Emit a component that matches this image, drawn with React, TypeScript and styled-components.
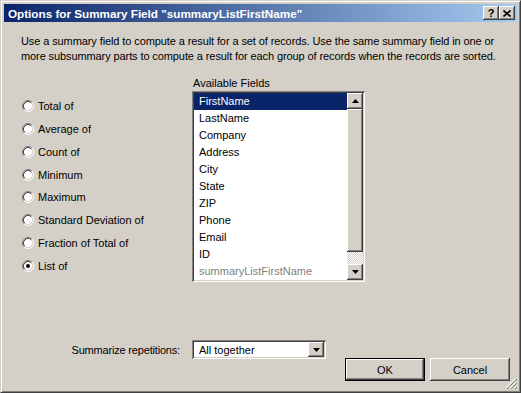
import React, { ReactElement } from "react";
import styled, { createGlobalStyle } from "styled-components";

const GlobalStyle = createGlobalStyle`
    html, body {
        margin: 0;
        padding: 0;
        background: #d4d0c8;
    }
    body {
        font-family: "Liberation Sans", Arial, sans-serif;
        font-size: 11px;
        color: #000;
    }
`;

const raised = `
    box-shadow: inset -1px -1px #404040, inset 1px 1px #ffffff, inset -2px -2px #808080, inset 2px 2px #d4d0c8;
`;

const sunken = `
    box-shadow: inset 1px 1px #808080, inset -1px -1px #ffffff, inset 2px 2px #404040, inset -2px -2px #d4d0c8;
`;

const Window = styled.div`
    position: relative;
    width: 521px;
    height: 393px;
    box-sizing: border-box;
    background: #d4d0c8;
    border: 1px solid;
    border-color: #d4d0c8 #404040 #404040 #d4d0c8;
    box-shadow: inset 1px 1px #ffffff, inset -1px -1px #808080;
    padding: 3px;
    display: flex;
    flex-direction: column;
`;

const TitleBar = styled.div`
    height: 18px;
    flex-shrink: 0;
    display: flex;
    align-items: center;
    padding: 0 2px;
    background: linear-gradient(to right, #0a246a, #a6caf0);
`;

const TitleText = styled.div`
    flex: 1;
    padding-left: 2px;
    font-weight: bold;
    font-size: 11.7px;
    color: #ffffff;
    white-space: nowrap;
`;

const CaptionButton = styled.div`
    width: 16px;
    height: 14px;
    box-sizing: border-box;
    background: #d4d0c8;
    ${raised}
    display: flex;
    align-items: center;
    justify-content: center;
    font-weight: bold;
    font-size: 11px;
    line-height: 14px;
    color: #000;
`;

const Description = styled.p`
    margin: 12px 0 0 17px;
    line-height: 15px;
    letter-spacing: -0.1px;
    white-space: nowrap;
`;

const MainRow = styled.div`
    display: flex;
    margin-top: 13px;
    padding-left: 18px;
`;

const ChoiceColumn = styled.div`
    width: 170px;
    padding-top: 18px;
    display: flex;
    flex-direction: column;
`;

const ChoiceRow = styled.label`
    height: 22.75px;
    display: flex;
    align-items: center;
    gap: 4px;
    white-space: nowrap;
`;

const FieldsColumn = styled.div`
    display: flex;
    flex-direction: column;
`;

const FieldsLabel = styled.div`
    height: 14px;
    line-height: 13px;
    padding-left: 1px;
`;

const ListBox = styled.div`
    width: 173px;
    height: 191px;
    box-sizing: border-box;
    padding: 2px;
    background: #ffffff;
    ${sunken}
    display: flex;
`;

const Rows = styled.div`
    flex: 1;
    display: flex;
    flex-direction: column;
`;

const Row = styled.div<{ $selected?: boolean; $dim?: boolean }>`
    height: 17px;
    line-height: 17px;
    padding-left: 5px;
    white-space: nowrap;
    background: ${(p) => (p.$selected ? "#0a246a" : "transparent")};
    color: ${(p) => (p.$selected ? "#ffffff" : p.$dim ? "#7f7f7f" : "#000000")};
`;

const ScrollBar = styled.div`
    width: 16px;
    display: flex;
    flex-direction: column;
`;

const ScrollButton = styled.div`
    width: 16px;
    height: 16px;
    box-sizing: border-box;
    background: #d4d0c8;
    ${raised}
    display: flex;
    align-items: center;
    justify-content: center;
    flex-shrink: 0;
`;

const Thumb = styled.div`
    height: 143px;
    background: #d4d0c8;
    ${raised}
`;

const Track = styled.div`
    flex: 1;
    background: repeating-conic-gradient(#ffffff 0 25%, #d4d0c8 0 50%) 0 0 / 2px 2px;
`;

const RepeatRow = styled.div`
    display: flex;
    align-items: center;
    margin-top: 58px;
    padding-left: 18px;
`;

const RepeatLabel = styled.div`
    width: 170px;
    box-sizing: border-box;
    padding-right: 12px;
    text-align: right;
    letter-spacing: -0.18px;
    white-space: nowrap;
`;

const Combo = styled.div`
    width: 134px;
    height: 19px;
    box-sizing: border-box;
    padding: 2px;
    background: #ffffff;
    ${sunken}
    display: flex;
    align-items: center;
`;

const ComboText = styled.div`
    flex: 1;
    padding-left: 5px;
`;

const ComboButton = styled(ScrollButton)`
    height: 15px;
`;

const ButtonRow = styled.div`
    display: flex;
    justify-content: flex-end;
    gap: 5px;
    margin-top: -1px;
    padding-right: 7px;
`;

const PushButton = styled.button<{ $default?: boolean }>`
    width: 80px;
    height: 23px;
    box-sizing: border-box;
    padding: 0;
    font-family: "Liberation Sans", Arial, sans-serif;
    font-size: 11px;
    color: #000;
    background: #d4d0c8;
    border: ${(p) => (p.$default ? "1px solid #000" : "none")};
    box-shadow: inset -1px -1px #404040, inset 1px 1px #ffffff, inset -2px -2px #808080, inset 2px 2px #d4d0c8;
`;

const Grip = styled.svg`
    position: absolute;
    right: 3px;
    bottom: 3px;
`;

const Radio = ({ checked }: { checked?: boolean }): ReactElement => (
    <svg width="12" height="12" viewBox="0 0 12 12">
        <circle cx="6" cy="6" r="4.5" fill="#ffffff" />
        <path d="M2.11 9.89 A5.5 5.5 0 0 1 9.89 2.11" fill="none" stroke="#808080" />
        <path d="M9.89 2.11 A5.5 5.5 0 0 1 2.11 9.89" fill="none" stroke="#ffffff" />
        <path d="M2.82 9.18 A4.5 4.5 0 0 1 9.18 2.82" fill="none" stroke="#404040" />
        <path d="M9.18 2.82 A4.5 4.5 0 0 1 2.82 9.18" fill="none" stroke="#d4d0c8" />
        {checked && <circle cx="6" cy="6" r="2" fill="#000" />}
    </svg>
);

const Arrow = ({ up }: { up?: boolean }): ReactElement => (
    <svg width="7" height="4" viewBox="0 0 7 4">
        <path d={up ? "M3.5 0 L7 4 L0 4 Z" : "M0 0 L7 0 L3.5 4 Z"} fill="#000" />
    </svg>
);

const choices = [
    "Total of",
    "Average of",
    "Count of",
    "Minimum",
    "Maximum",
    "Standard Deviation of",
    "Fraction of Total of",
    "List of"
];

const fields = ["FirstName", "LastName", "Company", "Address", "City", "State", "ZIP", "Phone", "Email", "ID"];

const App = (): ReactElement => (
    <>
        <GlobalStyle />
        <Window>
            <TitleBar>
                <TitleText>Options for Summary Field &quot;summaryListFirstName&quot;</TitleText>
                <CaptionButton>?</CaptionButton>
                <CaptionButton>
                    <svg width="8" height="7" viewBox="0 0 8 7">
                        <path d="M0.5 0.5 L7.5 6.5 M7.5 0.5 L0.5 6.5" stroke="#000" strokeWidth="1.6" />
                    </svg>
                </CaptionButton>
            </TitleBar>
            <Description>
                Use a summary field to compute a result for a set of records. Use the same summary field in one or
                <br />
                more subsummary parts to compute a result for each group of records when the records are sorted.
            </Description>
            <MainRow>
                <ChoiceColumn>
                    {choices.map((c) => (
                        <ChoiceRow key={c}>
                            <Radio checked={c === "List of"} />
                            {c}
                        </ChoiceRow>
                    ))}
                </ChoiceColumn>
                <FieldsColumn>
                    <FieldsLabel>Available Fields</FieldsLabel>
                    <ListBox>
                        <Rows>
                            {fields.map((f, i) => (
                                <Row key={f} $selected={i === 0}>
                                    {f}
                                </Row>
                            ))}
                            <Row $dim>summaryListFirstName</Row>
                        </Rows>
                        <ScrollBar>
                            <ScrollButton>
                                <Arrow up />
                            </ScrollButton>
                            <Thumb />
                            <Track />
                            <ScrollButton>
                                <Arrow />
                            </ScrollButton>
                        </ScrollBar>
                    </ListBox>
                </FieldsColumn>
            </MainRow>
            <RepeatRow>
                <RepeatLabel>Summarize repetitions:</RepeatLabel>
                <Combo>
                    <ComboText>All together</ComboText>
                    <ComboButton>
                        <Arrow />
                    </ComboButton>
                </Combo>
            </RepeatRow>
            <ButtonRow>
                <PushButton type="button" $default>
                    OK
                </PushButton>
                <PushButton type="button">Cancel</PushButton>
            </ButtonRow>
            <Grip width="12" height="12" viewBox="0 0 12 12">
                <path d="M11 1 L1 11 M11 5 L5 11 M11 9 L9 11" stroke="#ffffff" />
                <path d="M12 2 L2 12 M12 6 L6 12 M12 10 L10 12" stroke="#808080" />
            </Grip>
        </Window>
    </>
);

export default App;
